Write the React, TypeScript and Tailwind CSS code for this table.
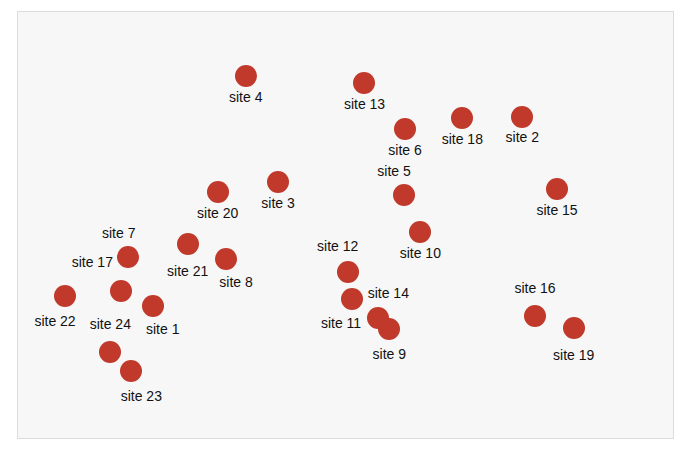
const dots: [number, number][] = [
  [245.5, 76.3],
  [364.3, 82.7],
  [405, 128.7],
  [462.3, 118],
  [522.3, 116.7],
  [403.7, 195.3],
  [557, 189],
  [420.3, 232.3],
  [278.3, 182],
  [217.7, 192],
  [128.3, 257.3],
  [188, 244],
  [226.3, 259.3],
  [65.3, 295.7],
  [120.7, 291],
  [153.3, 306.3],
  [110.3, 351.7],
  [131, 371],
  [347.7, 272.3],
  [351.7, 298.7],
  [377.7, 318],
  [389.3, 329],
  [535, 316.3],
  [574.3, 328.3],
];

const labels: [string, number, number][] = [
  ['site 4', 245.7, 97],
  ['site 13', 364.5, 104],
  ['site 6', 405, 150],
  ['site 18', 462.3, 139.3],
  ['site 2', 522.3, 137.3],
  ['site 5', 394, 171.3],
  ['site 15', 557, 210],
  ['site 10', 420.3, 253.3],
  ['site 3', 278, 203],
  ['site 20', 217.7, 213.3],
  ['site 7', 118.7, 233],
  ['site 17', 92.3, 261.7],
  ['site 21', 187.7, 270.7],
  ['site 8', 236, 282.3],
  ['site 22', 55, 320.7],
  ['site 24', 110.3, 324],
  ['site 1', 162.7, 329.3],
  ['site 23', 141.3, 395.7],
  ['site 12', 337.7, 246],
  ['site 14', 388.3, 292.7],
  ['site 11', 341, 323.3],
  ['site 9', 389.3, 354],
  ['site 16', 535, 288],
  ['site 19', 573.7, 354.7],
];

// box inner origin on the page (border included)
const OX = 18;
const OY = 12;

export default function App() {
  return (
    <div className="w-[690px] h-[450px] bg-white pt-[11px] pl-[17px] font-['Liberation_Sans',Arial,sans-serif]">
      <div className="relative w-[657px] h-[428px] border border-[#dcdcdc] bg-[#f7f7f7] overflow-hidden">
        {dots.map(([x, y], i) => (
          <div
            key={i}
            className="absolute w-[22px] h-[22px] -ml-[11px] -mt-[11px] rounded-full bg-[#c0392b]"
            style={{ left: x - OX, top: y - OY }}
          />
        ))}
        {labels.map(([text, x, y]) => (
          <div
            key={text}
            className="absolute -translate-x-1/2 -translate-y-1/2 whitespace-nowrap text-[14px] leading-[16px] text-[#111]"
            style={{ left: x - OX, top: y - OY }}
          >
            {text}
          </div>
        ))}
      </div>
    </div>
  );
}
